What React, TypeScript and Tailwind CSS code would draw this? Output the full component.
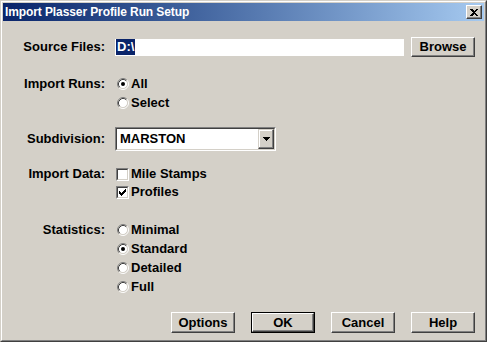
import React from "react"

const font = { fontFamily: '"Liberation Sans", Arial, sans-serif' }

function Btn({ children, w = "w-[64px]", h = "h-[21px]", isDefault = false }: { children: React.ReactNode; w?: string; h?: string; isDefault?: boolean }) {
  const face = (
    <div className="h-full w-full border border-t-white border-l-white border-r-[#404040] border-b-[#404040] shadow-[inset_-1px_-1px_#808080,inset_1px_1px_#d4d0c8] flex items-center justify-center text-[13px] font-bold text-black bg-[#d4d0c8]">
      {children}
    </div>
  )
  if (isDefault) {
    return <div className={`${w} ${h} border border-black`}>{face}</div>
  }
  return <div className={`${w} ${h}`}>{face}</div>
}

function Radio({ checked = false }: { checked?: boolean }) {
  return (
    <svg width="12" height="12" viewBox="0 0 12 12" className="shrink-0">
      <circle cx="6" cy="6" r="4.5" fill="#fff" />
      <path d="M2.11 9.89 A5.5 5.5 0 0 1 9.89 2.11" fill="none" stroke="#808080" />
      <path d="M9.89 2.11 A5.5 5.5 0 0 1 2.11 9.89" fill="none" stroke="#fff" />
      <path d="M2.82 9.18 A4.5 4.5 0 0 1 9.18 2.82" fill="none" stroke="#404040" />
      <path d="M9.18 2.82 A4.5 4.5 0 0 1 2.82 9.18" fill="none" stroke="#d4d0c8" />
      {checked && <circle cx="6" cy="6" r="2" fill="#000" />}
    </svg>
  )
}

const checkPixels = [
  [6, 0],
  [5, 1], [6, 1],
  [0, 2], [4, 2], [5, 2], [6, 2],
  [0, 3], [1, 3], [3, 3], [4, 3], [5, 3],
  [0, 4], [1, 4], [2, 4], [3, 4], [4, 4],
  [1, 5], [2, 5], [3, 5],
  [2, 6],
]

function Check({ checked = false }: { checked?: boolean }) {
  return (
    <div className="w-[13px] h-[13px] shrink-0 border border-t-[#808080] border-l-[#808080] border-r-white border-b-white">
      <div className="w-full h-full bg-white border border-t-[#404040] border-l-[#404040] border-r-[#d4d0c8] border-b-[#d4d0c8] flex items-center justify-center">
        {checked && (
          <svg width="7" height="7" viewBox="0 0 7 7" shapeRendering="crispEdges">
            {checkPixels.map(([x, y]) => (
              <rect key={`${x}-${y}`} x={x} y={y} width="1" height="1" fill="#000" />
            ))}
          </svg>
        )}
      </div>
    </div>
  )
}

function Label({ children, h = "h-[19px]" }: { children: React.ReactNode; h?: string }) {
  return <div className={`w-[102px] ${h} shrink-0 flex items-center justify-end text-[13px] font-bold text-black`}>{children}</div>
}

function Option({ children, checked = false, h = "h-[19px]", box = false }: { children: React.ReactNode; checked?: boolean; h?: string; box?: boolean }) {
  return (
    <div className={`flex items-center ${h} text-[13px] font-bold text-black`}>
      {box ? (
        <div className="ml-px">
          <Check checked={checked} />
        </div>
      ) : (
        <div className="ml-[2px] flex">
          <Radio checked={checked} />
        </div>
      )}
      <span className="ml-[2px]">{children}</span>
    </div>
  )
}

export default function App() {
  return (
    <div style={font} className="w-[487px] h-[342px] bg-[#d4d0c8] border border-t-[#d4d0c8] border-l-[#d4d0c8] border-r-[#404040] border-b-[#404040] select-none">
      <div className="h-full border border-t-white border-l-white border-r-[#808080] border-b-[#808080] p-px flex flex-col">
        {/* title bar */}
        <div className="h-[18px] shrink-0 bg-linear-to-r from-[#0a246a] to-[#a6caf0] flex items-center justify-between">
          <span className="ml-[2px] text-white font-bold text-[12px] tracking-[-0.1px]">Import Plasser Profile Run Setup</span>
          <div className="mr-[2px] w-[16px] h-[14px] border border-t-white border-l-white border-r-[#404040] border-b-[#404040] shadow-[inset_-1px_-1px_#808080] bg-[#d4d0c8] flex items-center justify-center">
            <svg width="8" height="7" viewBox="0 0 8 7" shapeRendering="crispEdges">
              <path d="M0 0h2l2 2 2-2h2L5 3.5 8 7H6L4 5 2 7H0l3-3.5z" fill="#000" />
            </svg>
          </div>
        </div>

        {/* body */}
        <div className="flex flex-col flex-1">
          <div className="mt-[16px] flex items-center h-[20px]">
            <Label h="h-[20px]">Source Files:</Label>
            <div className="ml-[10px] w-[289px] h-[17px] bg-white flex items-center">
              <span className="ml-px h-[16px] leading-[16px] bg-[#0a246a] text-white text-[13px] font-bold px-px">D:\</span>
            </div>
            <div className="ml-[7px]">
              <Btn h="h-[20px]">Browse</Btn>
            </div>
          </div>

          <div className="mt-[17px] flex">
            <Label>Import Runs:</Label>
            <div className="ml-[10px] flex flex-col">
              <Option checked>All</Option>
              <Option>Select</Option>
            </div>
          </div>

          <div className="mt-[15px] flex items-center h-[24px]">
            <Label h="h-[24px]">Subdivision:</Label>
            <div className="ml-[10px] w-[161px] h-[24px] border border-t-[#808080] border-l-[#808080] border-r-white border-b-white">
              <div className="h-full border border-t-[#404040] border-l-[#404040] border-r-[#d4d0c8] border-b-[#d4d0c8] bg-white flex items-center justify-between">
                <span className="ml-[3px] text-[13px] font-bold text-black">MARSTON</span>
                <div className="w-[16px] h-full border border-t-[#d4d0c8] border-l-[#d4d0c8] border-r-[#404040] border-b-[#404040] shadow-[inset_-1px_-1px_#808080,inset_1px_1px_#fff] bg-[#d4d0c8] flex items-center justify-center">
                  <svg width="7" height="4" viewBox="0 0 7 4" shapeRendering="crispEdges">
                    <path d="M0 0h7L3.5 4z" fill="#000" />
                  </svg>
                </div>
              </div>
            </div>
          </div>

          <div className="mt-[14px] flex">
            <Label h="h-[18px]">Import Data:</Label>
            <div className="ml-[10px] flex flex-col">
              <Option box h="h-[18px]">Mile Stamps</Option>
              <Option box checked h="h-[18px]">Profiles</Option>
            </div>
          </div>

          <div className="mt-[19px] flex">
            <Label>Statistics:</Label>
            <div className="ml-[10px] flex flex-col">
              <Option>Minimal</Option>
              <Option checked>Standard</Option>
              <Option>Detailed</Option>
              <Option h="h-[20px]">Full</Option>
            </div>
          </div>

          <div className="mt-[15px] flex justify-end gap-[16px] pr-[9px]">
            <Btn>Options</Btn>
            <Btn isDefault>OK</Btn>
            <Btn>Cancel</Btn>
            <Btn>Help</Btn>
          </div>
        </div>
      </div>
    </div>
  )
}
